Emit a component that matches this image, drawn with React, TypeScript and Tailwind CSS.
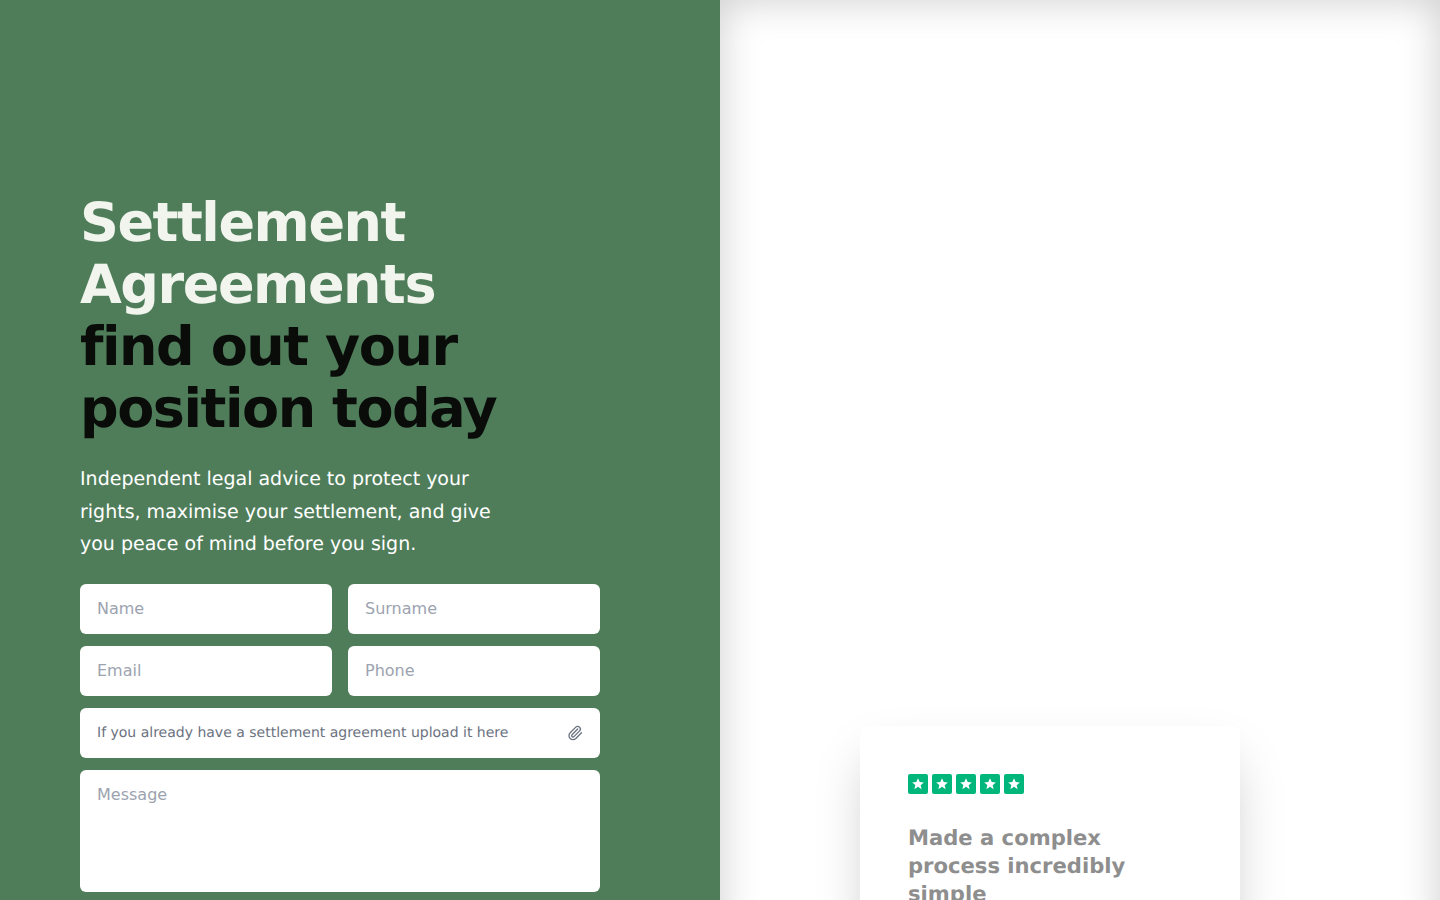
import { Paperclip } from "lucide-react";

const font = { fontFamily: '"DejaVu Sans", sans-serif' };

function Star() {
  return (
    <div className="w-5 h-5 rounded-[2px] bg-[#00b67a] grid place-items-center">
      <svg viewBox="0 0 24 24" className="w-[14px] h-[14px]" fill="#fff">
        <path d="M12 2l2.9 6.6 7.1.7-5.4 4.7 1.6 7L12 16.9 5.8 20.9l1.6-7L2 9.3l7.1-.7z" />
      </svg>
    </div>
  );
}

function Field({ placeholder }: { placeholder: string }) {
  return (
    <input
      placeholder={placeholder}
      className="w-full h-[50px] px-[17px] rounded-md bg-white text-base outline-none placeholder:text-[#9ca3af]"
    />
  );
}

export default function App() {
  return (
    <div style={font} className="h-screen overflow-hidden grid grid-cols-2 bg-white antialiased [text-rendering:geometricPrecision]">
      <section className="bg-[#4f7d5a] px-20 pt-[192px]">
        <h1 className="text-[54px] leading-[62px] font-bold tracking-[-1.45px] w-[480px]">
          <span className="text-[#f1f5ee]">Settlement Agreements</span>
          <br />
          <span className="text-[#0a0c0a]">find out your position today</span>
        </h1>
        <p className="mt-[23px] text-[19px] leading-[32.5px] text-white w-[420px]">
          Independent legal advice to protect your rights, maximise your settlement, and give you peace of mind before you sign.
        </p>
        <form className="mt-[23px] flex flex-col gap-3 w-[520px]">
          <div className="grid grid-cols-2 gap-4">
            <Field placeholder="Name" />
            <Field placeholder="Surname" />
          </div>
          <div className="grid grid-cols-2 gap-4">
            <Field placeholder="Email" />
            <Field placeholder="Phone" />
          </div>
          <div className="h-[50px] px-[17px] rounded-md bg-white flex items-center justify-between">
            <span className="pt-px text-sm text-[#6b7280]">If you already have a settlement agreement upload it here</span>
            <Paperclip className="w-4 h-4 text-[#6b7280]" />
          </div>
          <textarea
            placeholder="Message"
            className="h-[122px] px-[17px] py-[13px] rounded-md bg-white text-base outline-none resize-none placeholder:text-[#9ca3af]"
          />
        </form>
      </section>
      <section className="shadow-[inset_0_0_40px_rgba(0,0,0,0.2)] pt-[726px] pl-[140px]">
        <div className="w-[380px] bg-white p-12 rounded-lg shadow-[0_25px_50px_-12px_rgba(0,0,0,0.25)]">
          <div className="flex gap-1">
            <Star />
            <Star />
            <Star />
            <Star />
            <Star />
          </div>
          <h2 className="mt-[30px] text-[21.12px] leading-[28px] font-bold text-[#8e8e8e] w-[260px]">
            Made a complex process incredibly simple
          </h2>
        </div>
      </section>
    </div>
  );
}
